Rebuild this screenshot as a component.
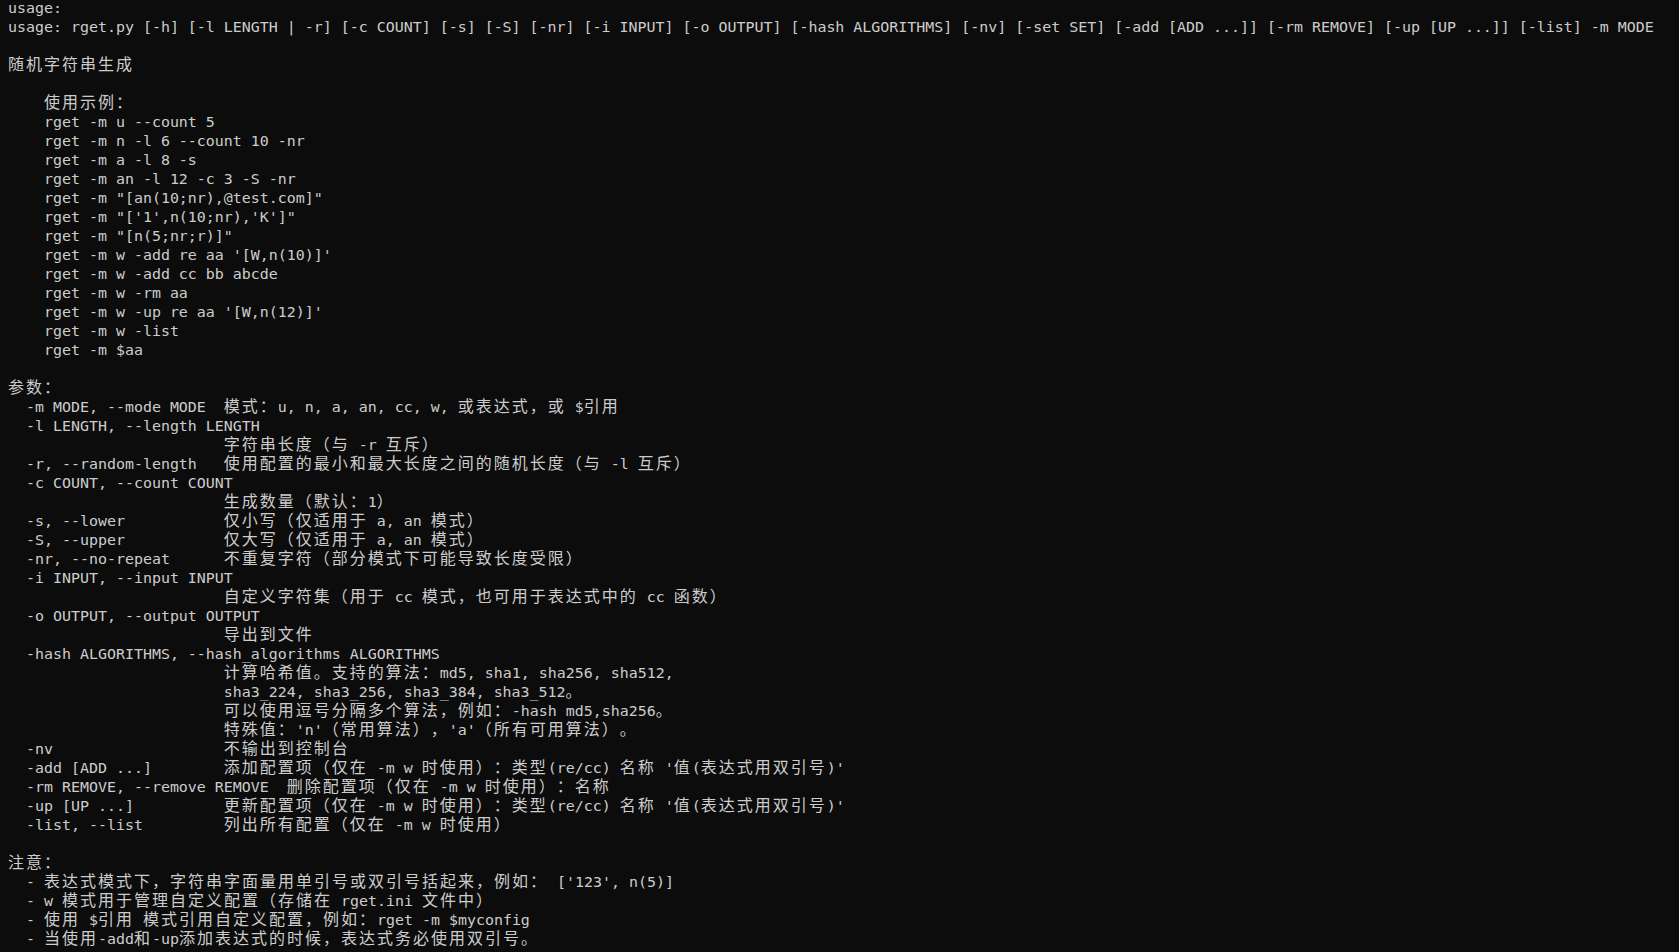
import React from 'react';

const lines = [
  "usage:",
  "usage: rget.py [-h] [-l LENGTH | -r] [-c COUNT] [-s] [-S] [-nr] [-i INPUT] [-o OUTPUT] [-hash ALGORITHMS] [-nv] [-set SET] [-add [ADD ...]] [-rm REMOVE] [-up [UP ...]] [-list] -m MODE",
  "",
  "随机字符串生成",
  "",
  "    使用示例：",
  "    rget -m u --count 5",
  "    rget -m n -l 6 --count 10 -nr",
  "    rget -m a -l 8 -s",
  "    rget -m an -l 12 -c 3 -S -nr",
  "    rget -m \"[an(10;nr),@test.com]\"",
  "    rget -m \"['1',n(10;nr),'K']\"",
  "    rget -m \"[n(5;nr;r)]\"",
  "    rget -m w -add re aa '[W,n(10)]'",
  "    rget -m w -add cc bb abcde",
  "    rget -m w -rm aa",
  "    rget -m w -up re aa '[W,n(12)]'",
  "    rget -m w -list",
  "    rget -m $aa",
  "",
  "参数：",
  "  -m MODE, --mode MODE  模式：u, n, a, an, cc, w, 或表达式，或 $引用",
  "  -l LENGTH, --length LENGTH",
  "                        字符串长度（与 -r 互斥）",
  "  -r, --random-length   使用配置的最小和最大长度之间的随机长度（与 -l 互斥）",
  "  -c COUNT, --count COUNT",
  "                        生成数量（默认：1）",
  "  -s, --lower           仅小写（仅适用于 a, an 模式）",
  "  -S, --upper           仅大写（仅适用于 a, an 模式）",
  "  -nr, --no-repeat      不重复字符（部分模式下可能导致长度受限）",
  "  -i INPUT, --input INPUT",
  "                        自定义字符集（用于 cc 模式，也可用于表达式中的 cc 函数）",
  "  -o OUTPUT, --output OUTPUT",
  "                        导出到文件",
  "  -hash ALGORITHMS, --hash_algorithms ALGORITHMS",
  "                        计算哈希值。支持的算法：md5, sha1, sha256, sha512,",
  "                        sha3_224, sha3_256, sha3_384, sha3_512。",
  "                        可以使用逗号分隔多个算法，例如：-hash md5,sha256。",
  "                        特殊值：'n'（常用算法），'a'（所有可用算法）。",
  "  -nv                   不输出到控制台",
  "  -add [ADD ...]        添加配置项（仅在 -m w 时使用）：类型(re/cc) 名称 '值(表达式用双引号)'",
  "  -rm REMOVE, --remove REMOVE  删除配置项（仅在 -m w 时使用）：名称",
  "  -up [UP ...]          更新配置项（仅在 -m w 时使用）：类型(re/cc) 名称 '值(表达式用双引号)'",
  "  -list, --list         列出所有配置（仅在 -m w 时使用）",
  "",
  "注意：",
  "  - 表达式模式下，字符串字面量用单引号或双引号括起来，例如： ['123', n(5)]",
  "  - w 模式用于管理自定义配置（存储在 rget.ini 文件中）",
  "  - 使用 $引用 模式引用自定义配置，例如：rget -m $myconfig",
  "  - 当使用-add和-up添加表达式的时候，表达式务必使用双引号。",
];

// wide chars take two terminal cells
const isWide = (ch) => ch.charCodeAt(0) >= 0x2e80;

function splitLine(text) {
  const parts = [];
  let buf = '';
  for (const ch of text) {
    if (isWide(ch)) {
      if (buf) parts.push({ wide: false, text: buf });
      buf = '';
      parts.push({ wide: true, text: ch });
    } else {
      buf += ch;
    }
  }
  if (buf) parts.push({ wide: false, text: buf });
  return parts;
}

function Line({ text }) {
  return (
    <div className="h-[19px] whitespace-pre">
      {splitLine(text).map((p, i) =>
        p.wide ? (
          <span
            key={i}
            className="inline-block w-[18px] text-left font-['Noto_Sans_CJK_SC',sans-serif] text-[16px] leading-[15px]"
          >
            {p.text}
          </span>
        ) : (
          <span key={i}>{p.text}</span>
        )
      )}
    </div>
  );
}

export default function App() {
  return (
    <div className="min-h-screen h-[952px] overflow-hidden bg-[#0c0c0c] text-[#cccccc]">
      <div className="mt-[-1px] pl-[8px] font-['DejaVu_Sans_Mono','Noto_Sans_CJK_SC',monospace] text-[14.95px] leading-[19px]">
        {lines.map((l, i) => (
          <Line key={i} text={l} />
        ))}
      </div>
    </div>
  );
}
